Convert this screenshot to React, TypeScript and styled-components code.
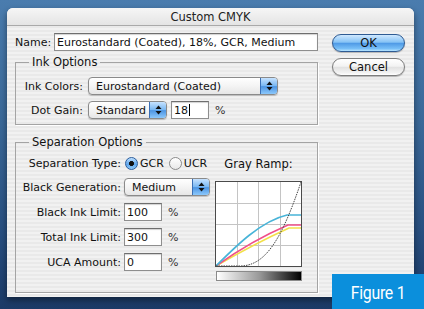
import React from "react";
import styled, { createGlobalStyle } from "styled-components";

const Global = createGlobalStyle`
  html, body { margin: 0; padding: 0; }
  body { font-family: "DejaVu Sans", "Noto Sans", sans-serif; }
`;

const Page = styled.div`
  position: relative;
  width: 424px;
  height: 309px;
  overflow: hidden;
  background: linear-gradient(180deg, #4a7cae 0%, #3a6898 40%, #284f80 75%, #1b3a66 100%);
  padding: 8px 0 0 7px;
  box-sizing: border-box;
`;

const Dialog = styled.div`
  width: 407px;
  height: 289px;
  border-radius: 6px 6px 0 0;
  overflow: hidden;
  box-shadow: 0 3px 6px rgba(0, 0, 0, 0.45);
  background: repeating-linear-gradient(180deg, #f1f1f1 0px, #f1f1f1 2px, #e9e9e9 2px, #e9e9e9 4px);
  display: flex;
  flex-direction: column;
  color: #111;
  font-size: 11px;
`;

const TitleBar = styled.div`
  height: 17px;
  flex: none;
  border-bottom: 1px solid #a9a9a9;
  background: linear-gradient(180deg, #f6f6f6 0%, #e4e4e4 100%);
  display: flex;
  align-items: center;
  justify-content: center;
  font-size: 11.5px;
  color: #222;
`;

const Body = styled.div`
  display: flex;
  padding: 7px 9px 0 8px;
`;

const MainColumn = styled.div`
  width: 303px;
  display: flex;
  flex-direction: column;
`;

const ButtonColumn = styled.div`
  margin-left: 14px;
  margin-top: 1px;
  width: 73px;
  display: flex;
  flex-direction: column;
  gap: 6px;
`;

const AquaButton = styled.div<{ $default?: boolean }>`
  height: 16px;
  border-radius: 9px;
  display: flex;
  align-items: center;
  justify-content: center;
  font-size: 11.5px;
  color: #111;
  border: 1px solid ${(p) => (p.$default ? "#2e5b93" : "#7d7d7d")};
  background: ${(p) =>
    p.$default
      ? "linear-gradient(180deg, #cfe8ff 0%, #86c3f5 45%, #4f9ae6 52%, #78bff7 85%, #b8e4ff 100%)"
      : "linear-gradient(180deg, #ffffff 0%, #f3f3f3 45%, #e2e2e2 52%, #f2f2f2 85%, #ffffff 100%)"};
  box-shadow: 0 1px 1px rgba(0, 0, 0, 0.25);
`;

const NameRow = styled.div`
  display: flex;
  align-items: center;
  height: 18px;
`;

const NameLabel = styled.span`
  width: 39px;
  flex: none;
`;

const Field = styled.div<{ $w: number }>`
  width: ${(p) => p.$w}px;
  height: 18px;
  box-sizing: border-box;
  border: 1px solid #8e8e8e;
  border-top-color: #6e6e6e;
  background: #fff;
  box-shadow: inset 0 1px 1px rgba(0, 0, 0, 0.18);
  padding-left: 2px;
  display: flex;
  align-items: center;
  white-space: nowrap;
  overflow: hidden;
`;

const Caret = styled.span`
  display: inline-block;
  width: 1px;
  height: 12px;
  background: #000;
  margin-left: 1px;
`;

const Group = styled.fieldset<{ $mt: number }>`
  margin: ${(p) => p.$mt}px 0 0 0;
  padding: 0;
  border: 1px solid #a4a4a4;
  box-shadow: 1px 1px 0 #ffffff;
  min-width: 0;
`;

const Legend = styled.legend`
  margin-left: 13px;
  padding: 0 3px;
  font-size: 11.5px;
  line-height: 14px;
`;

const InkGrid = styled.div`
  display: grid;
  grid-template-columns: 67px auto;
  column-gap: 5px;
  row-gap: 6px;
  align-items: center;
  justify-items: start;
  padding: 8px 0 5px 0;
`;

const Label = styled.span`
  justify-self: end;
  white-space: nowrap;
`;

const Inline = styled.div`
  display: flex;
  align-items: center;
  gap: 4px;
`;

const Percent = styled.span`
  margin-left: 2px;
  color: #333;
`;

const PopupWrap = styled.div<{ $w: number }>`
  width: ${(p) => p.$w}px;
  height: 18px;
  box-sizing: border-box;
  border: 1px solid #8a8a8a;
  border-radius: 4px;
  display: flex;
  overflow: hidden;
  background: linear-gradient(180deg, #ffffff 0%, #f4f4f4 50%, #e6e6e6 100%);
  box-shadow: 0 1px 1px rgba(0, 0, 0, 0.2);
`;

const PopupText = styled.span`
  flex: 1;
  padding-left: 7px;
  display: flex;
  align-items: center;
  white-space: nowrap;
`;

const PopupArrows = styled.span`
  width: 16px;
  flex: none;
  border-left: 1px solid #3a6fb5;
  background: linear-gradient(180deg, #c6e2ff 0%, #7ab8f2 48%, #4d95e3 54%, #8cc8fb 100%);
  display: flex;
  align-items: center;
  justify-content: center;
`;

const Popup = ({ w, text }: { w: number; text: string }) => (
  <PopupWrap $w={w}>
    <PopupText>{text}</PopupText>
    <PopupArrows>
      <svg width="7" height="10" viewBox="0 0 7 10">
        <path d="M3.5 0.5 L6.5 4 L0.5 4 Z" fill="#111" />
        <path d="M3.5 9.5 L6.5 6 L0.5 6 Z" fill="#111" />
      </svg>
    </PopupArrows>
  </PopupWrap>
);

const SepBody = styled.div`
  display: flex;
  padding: 6px 0 0 0;
  height: 137px;
`;

const SepGrid = styled.div`
  width: 196px;
  display: grid;
  grid-template-columns: 105px auto;
  grid-template-rows: 16px 18px 18px 18px 18px;
  column-gap: 3px;
  row-gap: 7px;
  align-items: center;
  justify-items: start;
  align-content: start;
`;

const RadioGroup = styled.div`
  display: flex;
  align-items: center;
  gap: 2px;
  margin-left: 1px;
`;

const RadioCircle = styled.span<{ $on?: boolean }>`
  width: 13px;
  height: 13px;
  box-sizing: border-box;
  border-radius: 50%;
  border: 1px solid ${(p) => (p.$on ? "#2b5d9c" : "#8a8a8a")};
  background: ${(p) =>
    p.$on
      ? "radial-gradient(circle at 50% 50%, #111 0 2.2px, transparent 2.7px), linear-gradient(180deg, #bfe0ff 0%, #5ea6ec 55%, #8fcaf9 100%)"
      : "linear-gradient(180deg, #ffffff 0%, #e8e8e8 100%)"};
  flex: none;
`;

const RadioText = styled.span`
  margin-right: 3px;
`;

const RampColumn = styled.div`
  margin-left: 3px;
  width: 87px;
  display: flex;
  flex-direction: column;
  align-items: center;
`;

const RampTitle = styled.span`
  height: 16px;
  line-height: 16px;
  margin-top: 1px;
  margin-bottom: 9px;
  font-size: 11.5px;
`;

const ChartBox = styled.div`
  width: 87px;
  height: 86px;
  box-sizing: border-box;
  border: 1px solid #4a4a4a;
  background: #fff;
`;

const RampBar = styled.div`
  margin-top: 4px;
  width: 86px;
  height: 10px;
  box-sizing: border-box;
  border: 1px solid #8a8a8a;
  background: linear-gradient(90deg, #ffffff 0%, #9a9a9a 50%, #000000 100%);
`;

const Badge = styled.div`
  position: absolute;
  right: 0;
  bottom: 0;
  width: 92px;
  height: 35px;
  background: #0b8fdc;
  color: #fff;
  display: flex;
  align-items: center;
  justify-content: center;
  font-family: Roboto, "Liberation Sans", sans-serif;
  font-size: 18px;
  letter-spacing: -0.3px;
  padding-top: 2px;
  box-sizing: border-box;
`;

const BadgeText = styled.span`
  display: inline-block;
  transform: scaleX(0.88);
`;

const Chart = () => (
  <svg width="85" height="84" viewBox="0 0 85 84">
    <g stroke="#c4c4c4" strokeWidth="1">
      <line x1="21.5" y1="0" x2="21.5" y2="84" />
      <line x1="42.5" y1="0" x2="42.5" y2="84" />
      <line x1="64.5" y1="0" x2="64.5" y2="84" />
      <line x1="0" y1="21.5" x2="85" y2="21.5" />
      <line x1="0" y1="42.5" x2="85" y2="42.5" />
      <line x1="0" y1="63.5" x2="85" y2="63.5" />
    </g>
    <path d="M0 84 Q38 62 73 46 L85 46" fill="none" stroke="#f2e04a" strokeWidth="1.6" />
    <path d="M0 84 Q35 59 72 43 L85 43" fill="none" stroke="#f0508a" strokeWidth="1.6" />
    <path d="M0 84 C20 64 45 39 71 33 L85 33" fill="none" stroke="#48b4d8" strokeWidth="1.6" />
    <path d="M0 84 L24 84 C50 84 66 56 85 0" fill="none" stroke="#444" strokeWidth="1" strokeDasharray="1.5 1" />
  </svg>
);

export default function App() {
  return (
    <Page>
      <Global />
      <Dialog>
        <TitleBar>Custom CMYK</TitleBar>
        <Body>
          <MainColumn>
            <NameRow>
              <NameLabel>Name:</NameLabel>
              <Field $w={264}>Eurostandard (Coated), 18%, GCR, Medium</Field>
            </NameRow>
            <Group $mt={4}>
              <Legend>Ink Options</Legend>
              <InkGrid>
                <Label>Ink Colors:</Label>
                <Popup w={190} text="Eurostandard (Coated)" />
                <Label>Dot Gain:</Label>
                <Inline>
                  <Popup w={79} text="Standard" />
                  <Field $w={38}>
                    18<Caret />
                  </Field>
                  <Percent>%</Percent>
                </Inline>
              </InkGrid>
            </Group>
            <Group $mt={10}>
              <Legend>Separation Options</Legend>
              <SepBody>
                <SepGrid>
                  <Label>Separation Type:</Label>
                  <RadioGroup>
                    <RadioCircle $on />
                    <RadioText>GCR</RadioText>
                    <RadioCircle />
                    <RadioText>UCR</RadioText>
                  </RadioGroup>
                  <Label>Black Generation:</Label>
                  <Popup w={86} text="Medium" />
                  <Label>Black Ink Limit:</Label>
                  <Inline>
                    <Field $w={38}>100</Field>
                    <Percent>%</Percent>
                  </Inline>
                  <Label>Total Ink Limit:</Label>
                  <Inline>
                    <Field $w={38}>300</Field>
                    <Percent>%</Percent>
                  </Inline>
                  <Label>UCA Amount:</Label>
                  <Inline>
                    <Field $w={38}>0</Field>
                    <Percent>%</Percent>
                  </Inline>
                </SepGrid>
                <RampColumn>
                  <RampTitle>Gray Ramp:</RampTitle>
                  <ChartBox>
                    <Chart />
                  </ChartBox>
                  <RampBar />
                </RampColumn>
              </SepBody>
            </Group>
          </MainColumn>
          <ButtonColumn>
            <AquaButton $default>OK</AquaButton>
            <AquaButton>Cancel</AquaButton>
          </ButtonColumn>
        </Body>
      </Dialog>
      <Badge>
        <BadgeText>Figure 1</BadgeText>
      </Badge>
    </Page>
  );
}
